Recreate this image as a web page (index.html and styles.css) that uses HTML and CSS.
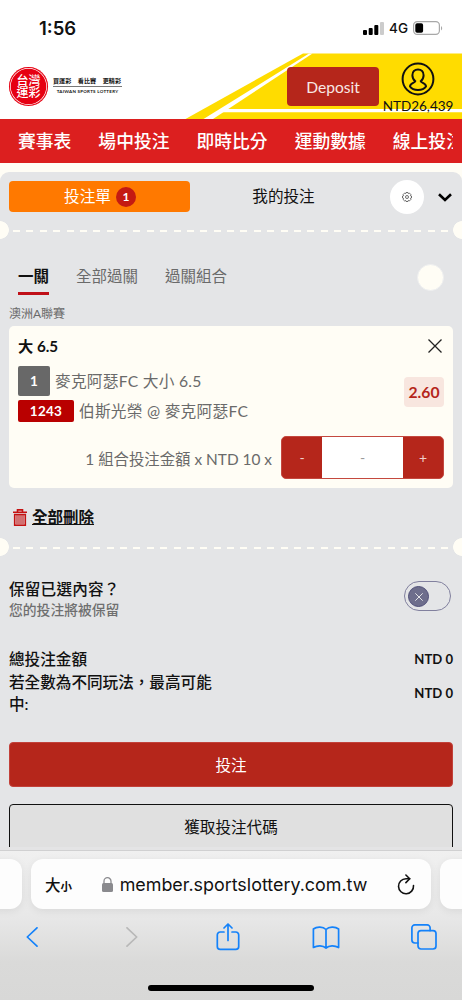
FILE: index.html
```html
<!DOCTYPE html>
<html lang="zh-Hant">

<head>
  <meta charset="UTF-8">
  <meta name="viewport" content="width=device-width, initial-scale=1.0">
  <title>台灣運彩</title>
  <link rel="stylesheet" href="styles.css">
</head>

<body>
  <div class="screen">
    <div class="status-bar">
      <span class="time">1:56</span>
      <div class="status-icons">
        <svg width="21" height="13" viewBox="0 0 21 13">
          <rect x="0" y="8" width="4" height="5" rx="1" />
          <rect x="5.700" y="6" width="4" height="7" rx="1" />
          <rect x="11.300" y="3" width="4" height="10" rx="1" />
          <rect x="17" y="0" width="4" height="13" rx="1" fill="#ccc" />
        </svg>
        <span class="network">4G</span>
        <svg width="30" height="14" viewBox="0 0 30 14">
          <rect x="0.600" y="0.600" width="25.800" height="12.800" rx="3.600" fill="none" stroke="#a8a8a8" stroke-width="1.200" />
          <rect x="2.300" y="2.200" width="7.800" height="9.600" rx="1.800" />
          <path d="M28 5v4.400c1.600-.8 1.600-3.600 0-4.400z" fill="#a8a8a8" />
        </svg>
      </div>
    </div>

    <div class="header">
      <svg class="header-bg" width="462" height="66" viewBox="0 0 462 66">
        <path d="M303 0.500H462V66H185.500z" fill="#ffdc00" />
        <path d="M309 0.500L203.500 66H213L312.500 0.500z" fill="#fff" />
        <path d="M227 56H462v3.200H222z" fill="#fff" />
      </svg>
      <div class="logo">
        <div class="logo-mark"><span>台灣</span><span>運彩</span></div>
        <div class="logo-text">
          <p class="slogan"><span>買運彩</span><span>看比賽</span><span>更精彩</span></p>
          <p class="brand">TAIWAN SPORTS LOTTERY</p>
        </div>
      </div>
      <div class="account">
        <button class="deposit">Deposit</button>
        <div class="user">
          <svg width="34" height="34" viewBox="0 0 34 34" fill="none" stroke="#111" stroke-width="2">
            <circle cx="17" cy="17" r="15.400" />
            <path d="M14.300 19.200c-2-1.500-2.900-3.700-2.900-6 0-3.500 2.300-5.700 5.600-5.700s5.600 2.200 5.600 5.700c0 2.300-.9 4.500-2.900 6 .3 2 5.300 1.700 5.300 5.300-1.800 2.700-4.700 3.500-8 3.500s-6.200-.8-8-3.500c0-3.600 5-3.300 5.300-5.300z" />
          </svg>
          <span class="balance">NTD26,439</span>
        </div>
      </div>
    </div>

    <div class="nav">
      <span>賽事表</span>
      <span>場中投注</span>
      <span>即時比分</span>
      <span>運動數據</span>
      <span>線上投注</span>
    </div>

    <div class="slip">
      <div class="slip-tabs">
        <div class="slip-tab active">投注單<span class="count">1</span></div>
        <div class="slip-tab">我的投注</div>
        <div class="settings">
          <svg width="10" height="10" viewBox="0 0 20 20" fill="none" stroke="#555" stroke-width="1.700">
            <path d="M8 1h4l.7 2.300 2.300-1 2.700 2.700-1 2.300L19 8v4l-2.300.7 1 2.300-2.700 2.700-2.300-1L12 19H8l-.7-2.300-2.300 1L2.300 15l1-2.300L1 12V8l2.300-.7-1-2.300L5 2.300l2.300 1z" />
            <circle cx="10" cy="10" r="3" />
          </svg>
        </div>
        <svg class="chevron" width="14" height="9" viewBox="0 0 14 9" fill="none" stroke="#000" stroke-width="2.600">
          <path d="M1 1.300l6 5.700 6-5.700" />
        </svg>
      </div>
      <div class="divider"></div>

      <div class="pick-tabs">
        <span class="pick-tab active">一關</span>
        <span class="pick-tab">全部過關</span>
        <span class="pick-tab">過關組合</span>
        <span class="dot"></span>
      </div>
      <p class="league">澳洲A聯賽</p>

      <div class="card">
        <div class="card-title">
          <h3>大 6.5</h3>
          <svg width="14" height="14" viewBox="0 0 14 14" stroke="#222" stroke-width="1.300">
            <path d="M.5.500l13 13M13.500.500l-13 13" />
          </svg>
        </div>
        <div class="selection">
          <div>
            <p class="market"><span class="tag">1</span>麥克阿瑟FC 大小 6.5</p>
            <p class="match"><span class="tag red">1243</span>伯斯光榮 @ 麥克阿瑟FC</p>
          </div>
          <span class="odds">2.60</span>
        </div>
        <div class="stake">
          <span class="stake-label">1 組合投注金額 x NTD 10 x</span>
          <div class="stepper">
            <span class="step">-</span>
            <span class="amount">-</span>
            <span class="step">+</span>
          </div>
        </div>
      </div>

      <div class="delete-all">
        <svg width="14" height="17" viewBox="0 0 14 17" fill="none" stroke="#c41212" stroke-width="1.600">
          <path d="M0 3.300h14M4.500 3V.9h5V3" />
          <path d="M1.700 5.500h10.600v10.700H1.700z" />
          <path d="M4 6v9.500M6 6v9.500M8 6v9.500M10 6v9.500" stroke-width="1.100" />
        </svg>
        <span>全部刪除</span>
      </div>
      <div class="divider"></div>

      <div class="keep">
        <div>
          <p class="keep-title">保留已選內容？</p>
          <p class="keep-note">您的投注將被保留</p>
        </div>
        <div class="toggle">
          <span class="knob">
            <svg width="8" height="8" viewBox="0 0 8 8" stroke="#e4e5e7" stroke-width="1">
              <path d="M.3.300l7.400 7.400M7.700.300L.3 7.700" />
            </svg>
          </span>
        </div>
      </div>

      <div class="totals">
        <div class="total"><span>總投注金額</span><span class="value">NTD 0</span></div>
        <div class="total"><span>若全數為不同玩法，最高可能<br>中:</span><span class="value">NTD 0</span></div>
      </div>

      <button class="place-bet">投注</button>
      <button class="get-code">獲取投注代碼</button>
    </div>

    <div class="browser">
      <div class="address-row">
        <span class="side-tab"></span>
        <div class="address">
          <span class="text-size">大<small>小</small></span>
          <div class="url">
            <svg width="11" height="15" viewBox="0 0 11 15">
              <rect x="0" y="6" width="11" height="9" rx="1.500" fill="#8a8a8e" />
              <path d="M2 7V4.200a3.500 3.500 0 0 1 7 0V7" fill="none" stroke="#8a8a8e" stroke-width="1.300" />
            </svg>
            <span>member.sportslottery.com.tw</span>
          </div>
          <svg width="18" height="21" viewBox="0 0 18 21" fill="none" stroke="#111" stroke-width="1.600" stroke-linecap="round" stroke-linejoin="round">
            <path d="M12.700 4.700H9A7.500 7.500 0 1 0 16.500 11.600" />
            <path d="M8.900 1l3.800 3.700L8.900 8.600" />
          </svg>
        </div>
        <span class="side-tab"></span>
      </div>
      <div class="toolbar">
        <svg height="20" viewBox="0 0 12 20"><path d="M11 .8L1.300 10l9.700 9.200" /></svg>
        <svg class="disabled" height="20" viewBox="-2 0 12 20"><path d="M1 .8l9.700 9.200L1 19.200" /></svg>
        <svg height="28" viewBox="0 0 23 28">
          <path d="M7.500 9H3.700A2.900 2.900 0 0 0 .8 11.900V23.500a2.900 2.900 0 0 0 2.900 2.900h15.600a2.900 2.900 0 0 0 2.900-2.900V11.900A2.900 2.900 0 0 0 19.300 9h-3.800M11.500 17.500V1M7.500 5l4-4 4 4" />
        </svg>
        <svg height="23" viewBox="0 0 27 23">
          <path d="M13.500 3.500C10.500.500 4.500.200.900 3v18.500c4-2.300 9.400-2.300 12.600.5 3.200-2.800 8.600-2.800 12.600-.5V3C22.500.200 16.500.500 13.500 3.500zV22" />
        </svg>
        <svg height="26" viewBox="0 0 26 26">
          <rect x="7" y="6.600" width="18" height="18.400" rx="3" />
          <path d="M7 19H3.800A2.900 2.900 0 0 1 .9 16.100V3.800A2.900 2.900 0 0 1 3.800.9h12.400a2.900 2.900 0 0 1 2.900 2.900v2.800" />
        </svg>
      </div>
      <div class="home-indicator"></div>
    </div>
  </div>
</body>

</html>
```
FILE: styles.css
```css
* {
  box-sizing: border-box;
}

body {
  font-family: Lato, 'Noto Sans CJK TC', sans-serif;
  margin: 0;
  background-color: #fffdf5;
  color: #111;
}

p,
h3 {
  margin: 0;
}

svg {
  display: block;
  flex: none;
}

button {
  display: block;
  font-family: inherit;
  padding: 0;
}

.screen {
  width: 462px;
  height: 1000px;
  overflow: hidden;
  display: flex;
  flex-direction: column;
  white-space: nowrap;
}

.status-bar {
  height: 53px;
  flex: none;
  background: #fff;
  display: flex;
  justify-content: space-between;
  padding: 18px 19px 0 39px;
}

.time {
  font-family: Inter, sans-serif;
  font-size: 18.5px;
  font-weight: 600;
  line-height: 20px;
}

.status-icons {
  display: flex;
  align-items: center;
  height: 20px;
  gap: 5px;
}

.network {
  font-family: Inter, sans-serif;
  font-size: 13.5px;
  font-weight: 500;
}

.header {
  height: 66px;
  flex: none;
  background: #fff;
  position: relative;
  display: flex;
  justify-content: space-between;
  padding: 0 9px;
}

.header-bg {
  position: absolute;
  left: 0;
  top: 0;
}

.logo {
  display: flex;
  padding-top: 14px;
  gap: 5px;
}

.logo-mark {
  width: 39px;
  height: 39px;
  border-radius: 50%;
  background: #e60012;
  box-shadow: inset 0 0 0 1px #e60012, inset 0 0 0 1.7px #fff;
  color: #fff;
  display: flex;
  flex-direction: column;
  align-items: center;
  justify-content: center;
  font-size: 12px;
  font-weight: 500;
  line-height: 12px;
}

.logo-text {
  width: 69px;
  padding-top: 8px;
}

.slogan {
  display: flex;
  justify-content: space-between;
  padding: 0 1px 0 0;
  height: 12px;
  border-bottom: 1px solid #777;
  font-size: 6.1px;
  font-weight: 700;
  line-height: 12px;
}

.brand {
  font-size: 4.5px;
  font-weight: 700;
  line-height: 9px;
  letter-spacing: 0.25px;
  text-align: center;
}

.account {
  position: relative;
  display: flex;
  gap: 4px;
}

.deposit {
  margin-top: 14px;
  width: 92px;
  height: 39px;
  border: 0;
  border-radius: 4px;
  background: #b5261b;
  color: #f8e8e4;
  font-size: 15.6px;
}

.user {
  width: 70px;
  display: flex;
  flex-direction: column;
  align-items: center;
  padding-top: 9px;
}

.balance {
  font-size: 13.5px;
  line-height: 21px;
}

.nav {
  height: 44px;
  flex: none;
  background: #dc1f1f;
  color: #fff;
  display: flex;
  gap: 27px;
  margin-bottom: 9px;
  border-left: 18px solid #dc1f1f;
  border-right: 9px solid #dc1f1f;
  overflow: hidden;
  font-size: 17.8px;
  font-weight: 500;
  line-height: 45px;
}

.slip {
  height: 675px;
  flex: none;
  background: #e4e5e7;
  border-radius: 9px 9px 0 0;
  padding: 8px 9px 0;
  overflow: hidden;
}

.slip-tabs {
  height: 33px;
  display: flex;
  align-items: center;
  font-size: 15.6px;
}

.slip-tab {
  width: 187px;
  line-height: 20px;
  padding-bottom: 2px;
  text-align: center;
}

.slip-tab.active {
  width: 181px;
  height: 31px;
  padding: 0 0 1px 1px;
  border-radius: 4px;
  background: #ff7900;
  color: #fff;
  display: flex;
  align-items: center;
  justify-content: center;
  gap: 5px;
}

.count {
  width: 20px;
  height: 20px;
  margin-top: 1px;
  border-radius: 50%;
  background: #c41a12;
  font-size: 12px;
  font-weight: 700;
  line-height: 20px;
  text-align: center;
}

.settings {
  width: 34px;
  height: 34px;
  margin-left: 13px;
  border-radius: 50%;
  background: #fff;
  display: flex;
  align-items: center;
  justify-content: center;
}

.chevron {
  margin: 2px 0 0 14px;
}

/* perforated ticket edge: dashes with a notch on each side */
.divider {
  height: 18px;
  margin: 8px -9px 0;
  background:
    radial-gradient(circle at 0 50%, #fffdf5 8.5px, transparent 9.2px),
    radial-gradient(circle at 100% 50%, #fffdf5 8.5px, transparent 9.2px),
    repeating-linear-gradient(90deg, #fffdf5 0 7px, transparent 7px 13.38px) 13px 9px / 436px 2px no-repeat;
}

.pick-tabs {
  height: 56px;
  margin-top: 21px;
  padding: 0 9px;
  display: flex;
  align-items: flex-start;
  gap: 27px;
  font-size: 15.5px;
  line-height: 32px;
  color: #6a6a6a;
}

.pick-tab.active {
  height: 35px;
  border-bottom: 3px solid #c01018;
  font-weight: 700;
  color: #111;
}

.dot {
  width: 27px;
  height: 27px;
  margin: 4px 0 0 auto;
  border: 1px solid #eeeff0;
  border-radius: 50%;
  background: #fffdf5;
}

.league {
  margin-top: -11px;
  height: 21px;
  font-size: 12px;
  line-height: 18px;
  color: #6a6a6a;
}

.card {
  height: 162px;
  border-radius: 5px;
  background: #fffdf5;
  padding: 9px;
}

.card-title {
  display: flex;
  justify-content: space-between;
  align-items: center;
  height: 22px;
  padding-right: 2px;
}

.card-title h3 {
  font-size: 15.2px;
  line-height: 22px;
}

.selection {
  height: 70px;
  padding-top: 9px;
  display: flex;
  justify-content: space-between;
  font-size: 15.7px;
  letter-spacing: 0.25px;
  color: #6a6a6a;
}

.market,
.match {
  display: flex;
  align-items: center;
  gap: 5px;
  height: 30px;
  line-height: 20px;
}

.tag {
  width: 32px;
  height: 30px;
  border-radius: 2px;
  background: #686868;
  color: #fff;
  font-size: 13.5px;
  font-weight: 700;
  line-height: 30px;
  text-align: center;
}

.tag.red {
  width: 56px;
  height: 22px;
  line-height: 22px;
  background: #b90000;
}

.odds {
  width: 40px;
  height: 30px;
  margin-top: 11px;
  border-radius: 4px;
  background: #f8e6df;
  color: #b5261b;
  font-weight: 700;
  line-height: 30px;
  text-align: center;
  letter-spacing: 0;
}

.stake {
  display: flex;
  justify-content: flex-end;
  align-items: center;
  gap: 9px;
  padding-top: 9px;
}

.stake-label {
  font-size: 15.4px;
  color: #6a6a6a;
}

.stepper {
  width: 163px;
  height: 43px;
  border: 1px solid #c4483f;
  border-radius: 5px;
  background: #b5261b;
  display: flex;
  line-height: 41px;
  text-align: center;
  font-size: 14px;
}

.step {
  width: 40px;
  color: #f0d0cc;
}

.amount {
  flex: 1;
  background: #fff;
  color: #999;
}

.delete-all {
  height: 42px;
  padding: 16px 4px 0;
  display: flex;
  gap: 5px;
  align-items: center;
  font-size: 15.5px;
  font-weight: 700;
  line-height: 24px;
  text-decoration: underline;
}

.keep {
  height: 70px;
  margin-top: 22px;
  display: flex;
  justify-content: space-between;
}

.keep-title {
  font-size: 15.6px;
  font-weight: 500;
  line-height: 23px;
  letter-spacing: 0.2px;
}

.keep-note {
  font-size: 13.8px;
  font-weight: 500;
  line-height: 18px;
  color: #6f6f6f;
}

.toggle {
  width: 47px;
  height: 30px;
  margin: 3px 2px 0 0;
  border: 1px solid #81809e;
  border-radius: 15px;
  padding: 4px 3px;
}

.knob {
  width: 21px;
  height: 21px;
  border: 1px solid #4f4e78;
  border-radius: 50%;
  background: #6e6e8c;
  display: flex;
  align-items: center;
  justify-content: center;
}

.total {
  display: flex;
  justify-content: space-between;
  align-items: center;
  font-size: 15.6px;
  font-weight: 500;
  line-height: 22.5px;
}

.value {
  font-size: 13.1px;
  font-weight: 700;
}

.place-bet,
.get-code {
  width: 100%;
  height: 45px;
  border-radius: 4px;
  font-size: 15.6px;
}

.place-bet {
  margin-top: 26px;
  border: 1px solid #c2413a;
  background: #b5261b;
  color: #fff;
}

/* runs on under the browser bar */
.get-code {
  height: 52px;
  margin-top: 17px;
  padding-bottom: 7px;
  border: 1px solid #111;
  background: #e0e0e0;
  color: #111;
}

.browser {
  height: 153px;
  flex: none;
  background:
    linear-gradient(#d0d0d1, #d0d0d1) 0 3px / 100% 1px no-repeat,
    linear-gradient(#e4e4e5 3px, #f0f0f0 3px, #e8e8e8 45%, #dadad9 75%, #d8d8d7);
  padding-top: 12px;
}

.address-row {
  display: flex;
  justify-content: center;
  gap: 9px;
}

.side-tab,
.address {
  flex: none;
  height: 50px;
  border-radius: 12px;
  background: #fdfdfd;
  box-shadow: 0 2px 8px rgba(0, 0, 0, 0.07);
}

.side-tab {
  width: 60px;
}

.address {
  width: 400px;
  display: flex;
  align-items: center;
  justify-content: space-between;
  padding: 0 16px 0 14px;
}

.text-size {
  font-size: 15.5px;
  font-weight: 500;
}

.text-size small {
  font-size: 11.5px;
  font-weight: 700;
}

.url {
  display: flex;
  align-items: center;
  gap: 7px;
  margin-right: -6px;
  margin-left: -6px;
  font-family: Inter, sans-serif;
  font-size: 17.9px;
}

.toolbar {
  display: flex;
  justify-content: space-between;
  align-items: center;
  height: 28px;
  margin-top: 14px;
  padding: 0 24px 0 18px;
}

.toolbar svg {
  width: 28px;
  fill: none;
  stroke: #1482fa;
  stroke-width: 1.7;
  stroke-linecap: round;
  stroke-linejoin: round;
}

.toolbar .disabled {
  stroke: #b8b8b8;
}

.home-indicator {
  width: 166px;
  height: 6px;
  margin: 34px auto 0;
  border-radius: 3px;
  background: #000;
}
```
